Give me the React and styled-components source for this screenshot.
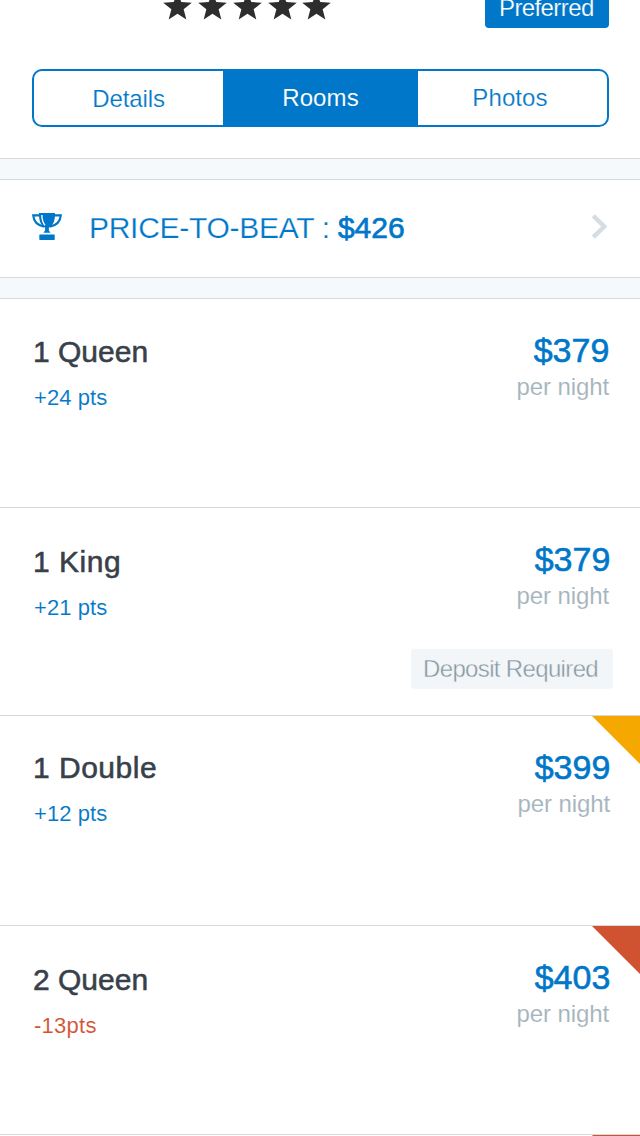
import React from "react";
import styled, { createGlobalStyle, css } from "styled-components";

const BLUE = "#0077c8";

const GlobalStyle = createGlobalStyle`
  * { box-sizing: border-box; }
  html, body { margin: 0; overflow: hidden; background: #fff; }
  body { font-family: "Liberation Sans", Arial, sans-serif; }
`;

// Weights between the installed cuts: "light" trims the strokes with the
// background colour, "medium" thickens them.
const light = (bg, w = 0.4) => css`-webkit-text-stroke: ${w}px ${bg};`;
const medium = (w = 0.6) => css`-webkit-text-stroke: ${w}px currentColor;`;

const Screen = styled.div`
  width: 640px;
  height: 1136px;
  overflow: hidden;
  background: #fff;
  display: flex;
  flex-direction: column;
`;

const Header = styled.header`
  flex: none;
  height: 159px;
  border-bottom: 1px solid #d6d8da;
  padding: 0 31px 0 32px;
`;

const HeaderTop = styled.div`
  display: flex;
  justify-content: space-between;
  align-items: flex-start;
  height: 69px;
  padding-left: 130px;
`;

const Stars = styled.svg`
  display: block;
`;

const Preferred = styled.div`
  width: 124px;
  height: 28px;
  padding-left: 14px;
  border-radius: 0 0 4px 4px;
  background: ${BLUE};
  color: #fff;
  font-size: 24px;
  line-height: 16px;
  letter-spacing: -0.6px;
  white-space: nowrap;
  ${light(BLUE, 0.2)}
`;

const Tabs = styled.nav`
  display: grid;
  grid-template-columns: 189px 195px 1fr;
  height: 58px;
  border: 2px solid ${BLUE};
  border-radius: 10px;
`;

const Tab = styled.button`
  border: 0;
  margin: 0;
  padding: ${(p) => p.$pad || "0"};
  font: 24px/52px "Liberation Sans", Arial, sans-serif;
  letter-spacing: ${(p) => p.$spacing || 0}px;
  color: ${(p) => (p.$active ? "#fff" : BLUE)};
  background: ${(p) => (p.$active ? BLUE : "transparent")};
  ${(p) => light(p.$active ? BLUE : "#fff", p.$active ? 0.1 : 0.2)}
`;

const Band = styled.div`
  flex: none;
  height: 21px;
  background: #f5f9fc;
  border-bottom: 1px solid #d6d8da;
`;

const PriceToBeat = styled.section`
  flex: none;
  height: 98px;
  display: flex;
  align-items: center;
  padding: 0 33px 4px 32px;
  border-bottom: 1px solid #d6d8da;
  color: ${BLUE};
`;

const BeatLabel = styled.div`
  flex: 1;
  margin-left: 27px;
  padding-top: 2px;
  font-size: 30px;
  line-height: 36px;
  letter-spacing: -0.28px;
  white-space: pre;
  ${light("#fff", 0.25)}
`;

const BeatAmount = styled.span`
  letter-spacing: 0;
  ${medium(0.7)}
`;

const RoomRow = styled.section`
  position: relative;
  flex: none;
  height: ${(p) => p.$height}px;
  border-bottom: 1px solid #d6d8da;
  display: flex;
  justify-content: space-between;
`;

const RoomInfo = styled.div`
  padding: ${(p) => p.$top}px 0 0 33px;
`;

const RoomName = styled.h2`
  margin: 0 0 14px;
  font-size: 30px;
  font-weight: 400;
  line-height: 36px;
  letter-spacing: ${(p) => p.$spacing || 0}px;
  color: #384049;
  ${medium(0.55)}
`;

const Points = styled.div`
  padding-left: 1px;
  font-size: 22px;
  line-height: 28px;
  letter-spacing: ${(p) => (p.$loss ? 0.25 : 0.08)}px;
  color: ${(p) => (p.$loss ? "#d05331" : BLUE)};
  ${light("#fff", 0.1)}
`;

const RoomPrice = styled.div`
  display: flex;
  flex-direction: column;
  align-items: flex-end;
  padding: 31px 27px 0 0;
`;

const Amount = styled.div`
  margin-right: ${(p) => p.$inset - 0.3}px;
  font-size: 34px;
  line-height: 40px;
  color: ${BLUE};
  ${medium(0.6)}
`;

const PerNight = styled.div`
  margin: 3px ${(p) => p.$inset}px 0 0;
  font-size: 24px;
  line-height: 28px;
  letter-spacing: -0.1px;
  color: #a5b4bd;
  ${light("#fff", 0.1)}
`;

const Deposit = styled.div`
  width: 202px;
  height: 40px;
  margin-top: 39px;
  padding-left: 12px;
  border-radius: 4px;
  background: #f2f6f9;
  color: #87969f;
  font-size: 24px;
  line-height: 40px;
  letter-spacing: -0.65px;
  white-space: nowrap;
  ${light("#f2f6f9", 0.4)}
`;

const Corner = styled.div`
  position: absolute;
  top: 0;
  right: 0;
  width: 48px;
  height: 48px;
  background: ${(p) => p.$color};
  clip-path: polygon(0 0, 100% 0, 100% 100%);
`;

const starPoints = (cx, cy, r) =>
  Array.from({ length: 10 }, (_, i) => {
    const a = (Math.PI / 5) * i - Math.PI / 2;
    const d = i % 2 ? r * 0.43 : r;
    return `${(cx + d * Math.cos(a)).toFixed(2)},${(cy + d * Math.sin(a)).toFixed(2)}`;
  }).join(" ");

const StarRating = () => (
  <Stars width="170" height="24" viewBox="0 0 170 24" fill="#2d2d2d">
    {[15.5, 50.5, 85.5, 120.5, 154.5].map((x) => (
      <polygon key={x} points={starPoints(x, 7.3, 15)} />
    ))}
  </Stars>
);

const Trophy = () => (
  <svg width="30" height="27" viewBox="0 0 30 27" fill={BLUE}>
    <path d="M7 0H23C23.300 7 21.500 12 17.200 14.400C16.500 14.900 16.600 17.800 18.600 19.800H11.400C13.400 17.800 13.500 14.900 12.800 14.400C8.500 12 6.700 7 7 0Z" />
    <path d="M7.300 2.400H1.200C1.600 7.500 5 12.200 12 13.600M22.700 2.400H28.800C28.400 7.500 25 12.200 18 13.600" fill="none" stroke={BLUE} strokeWidth="2.100" />
    <path d="M9.800 2C9.900 6.500 11 10 13 12.300" fill="none" stroke="#fff" strokeWidth="1.400" />
    <rect x="7.300" y="21.400" width="15.400" height="5.500" rx="0.600" />
  </svg>
);

const Chevron = () => (
  <svg width="16" height="27" viewBox="0 0 16 27" fill="none">
    <path d="M2.300 2.800L13.300 13.500L2.300 24.200" stroke="#d6dde2" strokeWidth="4.400" />
  </svg>
);

const rooms = [
  { name: "1 Queen", points: "+24 pts", price: "$379", height: 209, top: 35, inset: 4, nightInset: 4 },
  { name: "1 King", points: "+21 pts", price: "$379", height: 208, top: 36, inset: 3, nightInset: 4, spacing: 0.5, deposit: true },
  { name: "1 Double", points: "+12 pts", price: "$399", height: 210, top: 34, inset: 3, nightInset: 3, spacing: 0.5, corner: "#f5a800" },
  { name: "2 Queen", points: "-13pts", price: "$403", height: 209, top: 36, inset: 3, nightInset: 4, corner: "#d05331", loss: true },
];

export default function App() {
  return (
    <Screen>
      <GlobalStyle />
      <Header>
        <HeaderTop>
          <StarRating />
          <Preferred>Preferred</Preferred>
        </HeaderTop>
        <Tabs>
          <Tab $pad="1px 0 0 0" $spacing={-0.1}>Details</Tab>
          <Tab $active $spacing={0.1}>Rooms</Tab>
          <Tab $pad="0 5px 0 0" $spacing={0.1}>Photos</Tab>
        </Tabs>
      </Header>
      <Band />
      <PriceToBeat>
        <Trophy />
        <BeatLabel>
          PRICE-TO-BEAT : <BeatAmount>$426</BeatAmount>
        </BeatLabel>
        <Chevron />
      </PriceToBeat>
      <Band />
      {rooms.map((r) => (
        <RoomRow key={r.name} $height={r.height}>
          <RoomInfo $top={r.top}>
            <RoomName $spacing={r.spacing}>{r.name}</RoomName>
            <Points $loss={r.loss}>{r.points}</Points>
          </RoomInfo>
          <RoomPrice>
            <Amount $inset={r.inset}>{r.price}</Amount>
            <PerNight $inset={r.nightInset}>per night</PerNight>
            {r.deposit && <Deposit>Deposit Required</Deposit>}
          </RoomPrice>
          {r.corner && <Corner $color={r.corner} />}
        </RoomRow>
      ))}
      <RoomRow $height={209}>
        <Corner $color="#d05331" />
      </RoomRow>
    </Screen>
  );
}
